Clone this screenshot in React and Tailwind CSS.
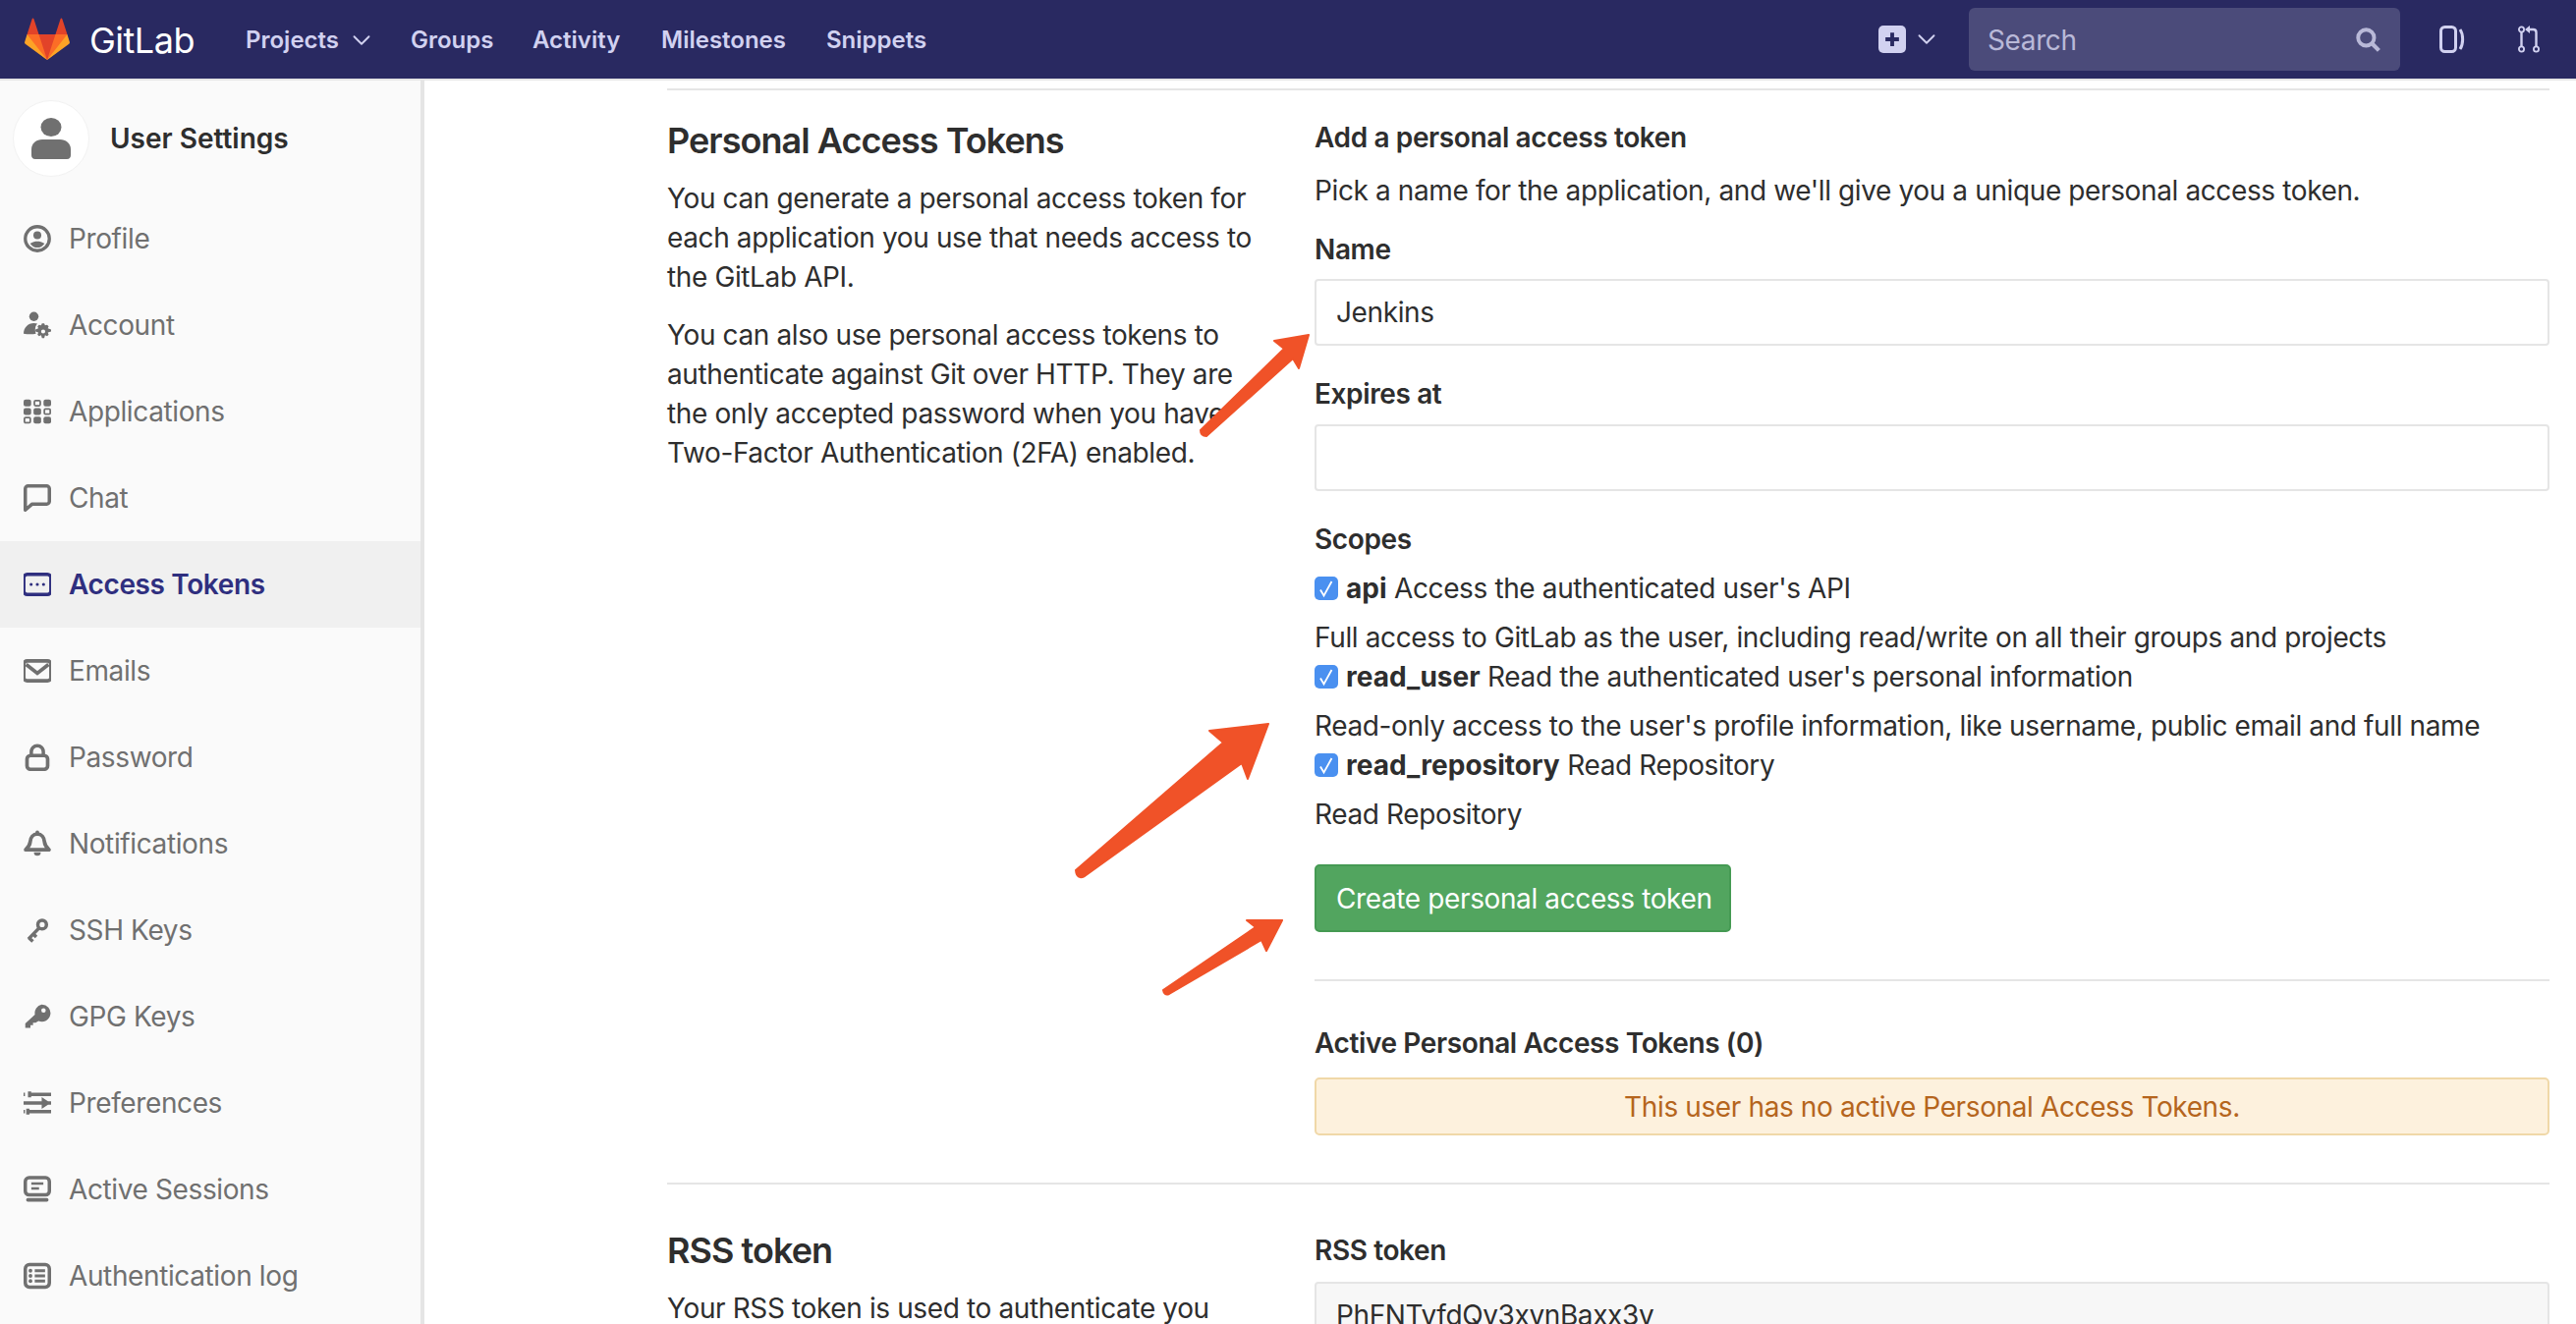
import { ChevronDown } from 'lucide-react';

const Tanuki = () => (
  <svg viewBox="0 0 36 36" className="w-[48px] h-[46px]">
    <path fill="#e24329" d="M2 14l9.38 9v-9l-4-12.28c-.205-.632-1.176-.632-1.38 0z" />
    <path fill="#e24329" d="M34 14l-9.38 9v-9l4-12.28c.205-.632 1.176-.632 1.38 0z" />
    <path fill="#e24329" d="M18 34.38 3 14 33 14Z" />
    <path fill="#fc6d26" d="M18 34.38 11.38 14 2 14 6 25Z" />
    <path fill="#fc6d26" d="M18 34.38 24.62 14 34 14 30 25Z" />
    <path fill="#fca326" d="M2 14L.1 20.16c-.18.565 0 1.2.5 1.56l17.42 12.66z" />
    <path fill="#fca326" d="M34 14l1.9 6.16c.18.565 0 1.2-.5 1.56L18 34.38z" />
  </svg>
);

const icons = {
  profile: (
    <>
      <circle cx="8" cy="8" r="7" fill="none" stroke="currentColor" strokeWidth="1.9" />
      <circle cx="8" cy="6" r="2.3" />
      <path d="M3.8 10.8c1.5-1 2.8-1.3 4.2-1.3s2.7.3 4.2 1.3C11 12.4 9.6 13.2 8 13.2s-3-.8-4.2-2.4z" />
    </>
  ),
  account: (
    <>
      <circle cx="6" cy="3" r="2.7" />
      <path d="M0 13c0-3.5 2.5-6.2 6-6.2.8 0 1.5.1 2 .4-1.2 1.2-1.6 3.6-.8 5.8-2 .4-4.5.4-7.2 0z" />
      <path d="M12 7l.5 1.2 1.2-.4.9.9-.5 1.2 1.9.6v1.2l-1.9.6.5 1.2-.9.9-1.2-.5-.5 1.6h-1.3l-.5-1.6-1.2.5-.9-.9.5-1.2-1.7-.6v-1.2l1.7-.6-.5-1.2.9-.9 1.2.4.5-1.2zm-.6 3.5a1.2 1.2 0 100 2.4 1.2 1.2 0 000-2.4z" fillRule="evenodd" />
    </>
  ),
  applications: (
    <>
      <rect x="0" y="1" width="4.4" height="4" rx="1.2" />
      <rect x="6.3" y="1.6" width="3.4" height="3" rx=".7" fill="none" stroke="currentColor" strokeWidth="1" />
      <rect x="11.6" y="1" width="4.4" height="4" rx="1.2" />
      <rect x="0" y="6" width="4.4" height="4" rx="1.2" />
      <rect x="5.8" y="6" width="4.4" height="4" rx="1.2" />
      <rect x="12.1" y="6.5" width="3.4" height="3" rx=".7" fill="none" stroke="currentColor" strokeWidth="1" />
      <rect x=".5" y="11.5" width="3.4" height="3" rx=".7" fill="none" stroke="currentColor" strokeWidth="1" />
      <rect x="5.8" y="11" width="4.4" height="4" rx="1.2" />
      <rect x="11.6" y="11" width="4.4" height="4" rx="1.2" />
    </>
  ),
  chat: (
    <path d="M2.5 1h11c.6 0 1.5.6 1.5 1.5v7.5c0 1-.9 1.5-1.5 1.5H5L1 15V2.5C1 1.6 1.900 1 2.500 1z" fill="none" stroke="currentColor" strokeWidth="2" strokeLinejoin="round" />
  ),
  token: (
    <>
      <rect x=".1" y="2.2" width="15.8" height="11.6" rx="2" fill="none" stroke="currentColor" strokeWidth="2" />
      <circle cx="4.400" cy="8" r=".9" />
      <circle cx="8" cy="8" r=".9" />
      <circle cx="11.600" cy="8" r=".9" />
    </>
  ),
  email: (
    <>
      <rect x=".1" y="2.200" width="15.8" height="11.6" rx="2" fill="none" stroke="currentColor" strokeWidth="2.1" />
      <path d="M1.500 4.300L8 9.400l6.500-5.100" fill="none" stroke="currentColor" strokeWidth="2.100" />
    </>
  ),
  lock: (
    <>
      <rect x="2" y="7" width="12" height="8" rx="2" fill="none" stroke="currentColor" strokeWidth="2.100" />
      <path d="M4.500 7V4.800a3.500 3.500 0 017 0V7" fill="none" stroke="currentColor" strokeWidth="2" />
    </>
  ),
  bell: (
    <>
      <path d="M8 2.400c2.600 0 3.900 2 4.100 4.300.2 2 1.200 3.400 2.700 4.800H1.200c1.500-1.400 2.500-2.800 2.700-4.800C4.100 4.400 5.400 2.400 8 2.400z" fill="none" stroke="currentColor" strokeWidth="2.100" strokeLinejoin="round" />
      <circle cx="8" cy="1.400" r="1.100" />
      <path d="M6 13h4a2 2 0 01-4 0z" />
    </>
  ),
  sshKey: (
    <>
      <circle cx="10.800" cy="4.800" r="2.500" fill="none" stroke="currentColor" strokeWidth="2" />
      <path d="M9 6.800L2.800 13.200M3.200 12.600l2.200 2M5.600 10.200l1.800 1.800" fill="none" stroke="currentColor" strokeWidth="2" />
    </>
  ),
  gpgKey: (
    <>
      <path d="M10.500 1a5 5 0 11-1.800 9.600L7 11.500H5.500V13H4v1.500H1V12l5.600-5.200A5 5 0 0110.500 1z" />
      <circle cx="11.600" cy="4.400" r="1.300" fill="#fafafa" />
    </>
  ),
  prefs: (
    <path d="M0 3h.8M3.400 3H16M3.500 1.300v3.400M0 8h11M13 8h3M11.500 6.300l2.500 1.700-2.500 1.700zM0 13h.8M3 13h13M2.500 11.300v3.400" fill="none" stroke="currentColor" strokeWidth="1.900" />
  ),
  sessions: (
    <>
      <rect x="1" y="1.200" width="14" height="10" rx="2.200" fill="none" stroke="currentColor" strokeWidth="2" />
      <path d="M4.500 4.600h7M4.500 7.400h4.500" fill="none" stroke="currentColor" strokeWidth="1.500" />
      <rect x="1.500" y="13" width="13" height="2.200" rx="1" />
    </>
  ),
  log: (
    <>
      <rect x="1" y="1.400" width="14" height="13.200" rx="2.400" fill="none" stroke="currentColor" strokeWidth="2" />
      <path d="M6.500 5h6M6.500 8h6M6.500 11h6" fill="none" stroke="currentColor" strokeWidth="1.700" />
      <circle cx="4" cy="5" r="1.100" />
      <circle cx="4" cy="8" r="1.100" />
      <circle cx="4" cy="11" r="1.100" />
    </>
  ),
};

const navLinks = [
  ['Profile', 'profile'],
  ['Account', 'account'],
  ['Applications', 'applications'],
  ['Chat', 'chat'],
  ['Access Tokens', 'token'],
  ['Emails', 'email'],
  ['Password', 'lock'],
  ['Notifications', 'bell'],
  ['SSH Keys', 'sshKey'],
  ['GPG Keys', 'gpgKey'],
  ['Preferences', 'prefs'],
  ['Active Sessions', 'sessions'],
  ['Authentication log', 'log'],
];

const scopes = [
  ['api', "Access the authenticated user's API", 'Full access to GitLab as the user, including read/write on all their groups and projects'],
  ['read_user', "Read the authenticated user's personal information", "Read-only access to the user's profile information, like username, public email and full name"],
  ['read_repository', 'Read Repository', 'Read Repository'],
];

const Check = () => (
  <span className="w-[24px] h-[24px] rounded-[5px] bg-[#4a90f0] flex items-center justify-center shrink-0 mr-[8px]">
    <svg viewBox="0 0 24 24" className="w-[24px] h-[24px]">
      <path d="M6 13.500l3.500 6L17.500 5" fill="none" stroke="#fff" strokeWidth="1.800" />
    </svg>
  </span>
);

const Header = () => (
  <header className="h-[82px] shrink-0 bg-[#292961] border-b-2 border-[#e5e5e5] flex items-center pl-[24px] pr-[37px]">
    <Tanuki />
    <span className="ml-[19px] mt-[2px] text-[36px] text-white tracking-[-0.5px] w-[159px]">GitLab</span>
    <nav className="flex items-center mt-[2px] text-[24px] font-semibold tracking-normal text-[#d1d1f0]">
      <span className="w-[103px]">Projects</span>
      <ChevronDown className="w-[30px] h-[30px] mr-[35px]" strokeWidth={1.5} />
      <span className="w-[124px]">Groups</span>
      <span className="w-[131px]">Activity</span>
      <span className="w-[168px]">Milestones</span>
      <span>Snippets</span>
    </nav>
    <div className="ml-auto flex items-center">
      <span className="w-[28px] h-[28px] rounded-[5px] bg-[#d1d1f0] flex items-center justify-center">
        <svg viewBox="0 0 16 16" className="w-[22px] h-[22px]">
          <path d="M8 3v10M3 8h10" stroke="#292961" strokeWidth="2.800" />
        </svg>
      </span>
      <ChevronDown className="w-[30px] h-[30px] ml-[6px] text-[#d1d1f0]" strokeWidth={1.5} />
      <div className="ml-[28px] w-[439px] h-[64px] rounded-[6px] bg-[#4b4b7a] flex items-center pl-[19px] pr-[20px] text-[28px] text-[#b9b9d8]">
        <span className="mt-[2px]">Search</span>
        <svg viewBox="0 0 16 16" className="ml-auto w-[26px] h-[26px]">
          <circle cx="7" cy="7" r="5" fill="none" stroke="#b9b9d8" strokeWidth="2.400" />
          <path d="M10.500 10.500L15 15" stroke="#b9b9d8" strokeWidth="2.600" />
        </svg>
      </div>
      <svg viewBox="0 0 26 28" className="ml-[40px] w-[26px] h-[28px] text-[#d1d1f0]">
        <rect x="1.500" y="1.500" width="15" height="25" rx="4" fill="none" stroke="currentColor" strokeWidth="3" />
        <path d="M21 4c3.500 5 3.500 15 0 20" fill="none" stroke="currentColor" strokeWidth="3" />
      </svg>
      <svg viewBox="0 0 22 28" className="ml-[54px] w-[22px] h-[28px] text-[#d1d1f0]">
        <circle cx="3.500" cy="4" r="2.600" fill="none" stroke="currentColor" strokeWidth="1.800" />
        <circle cx="3.500" cy="24" r="2.600" fill="none" stroke="currentColor" strokeWidth="1.800" />
        <circle cx="18.500" cy="24" r="2.600" fill="none" stroke="currentColor" strokeWidth="1.800" />
        <path d="M3.500 7v14M18.500 21V7c0-2-1-3-3-3h-4" fill="none" stroke="currentColor" strokeWidth="2.400" />
        <path d="M12 0v8L7 4z" fill="currentColor" />
      </svg>
    </div>
  </header>
);

const Sidebar = () => (
  <aside className="w-[432px] shrink-0 bg-[#fafafa] border-r-4 border-[#e5e5e5]">
    <div className="h-[117px] flex items-center pl-[13px]">
      <span className="w-[78px] h-[78px] rounded-full bg-white border border-[#f2f2f2] flex items-center justify-center">
        <svg viewBox="0 0 40 42" className="w-[40px] h-[42px] text-[#707070]">
          <ellipse cx="20" cy="9.500" rx="10.500" ry="9.500" fill="currentColor" />
          <path d="M0 38v-6c0-6 5-10 11-10h18c6 0 11 4 11 10v6c0 2-1 4-4 4H4c-3 0-4-2-4-4z" fill="currentColor" />
        </svg>
      </span>
      <span className="ml-[21px] text-[28px] font-semibold tracking-normal text-[#2e2e2e]">User Settings</span>
    </div>
    {navLinks.map(([label, icon]) => {
      const active = label === 'Access Tokens';
      return (
        <div key={label} className={`h-[88px] flex items-center pl-[24px] text-[28px] ${active ? 'bg-[#f0f0f0] text-[#2f2f7f] font-semibold' : 'text-[#707070]'}`}>
          <svg viewBox="0 0 16 16" fill="currentColor" className="w-[28px] h-[28px] shrink-0">
            {icons[icon]}
          </svg>
          <span className="ml-[18px]">{label}</span>
        </div>
      );
    })}
  </aside>
);

const Arrows = () => (
  <svg className="absolute inset-0 w-full h-full pointer-events-none" viewBox="0 0 2622 1348">
    <g fill="#f05228" stroke="#f05228" strokeWidth="2" strokeLinejoin="round">
      <path d="M1332 341L1297 347L1307 355L1222 438Q1222 444 1228 444L1316 365L1322 375Z" />
      <path d="M1291 737L1231 744L1245 756L1095 886Q1096 896 1104 892L1264 777L1270 793Z" />
      <path d="M1305 937L1269 937L1278 944L1184 1008Q1185 1014 1190 1012L1284 957L1289 968Z" />
    </g>
  </svg>
);

export default function App() {
  return (
    <div className="relative h-screen overflow-hidden flex flex-col bg-white text-[28px] leading-[40px] tracking-[-0.38px] text-[#2e2e2e] font-['Inter','Liberation_Sans',sans-serif]">
      <Header />
      <div className="flex flex-1 min-h-0">
        <Sidebar />
        <main className="flex-1 pl-[247px] pr-[27px]">
          <hr className="mt-[8px] border-t-2 border-[#e5e5e5]" />
          <section className="flex pt-[28px]">
            <div className="w-[659px] shrink-0 pr-[50px]">
              <h2 className="text-[36px] font-semibold leading-[50px] tracking-[-0.95px] -mt-[2px]">Personal Access Tokens</h2>
              <p className="mt-[14px]">You can generate a personal access token for each application you use that needs access to the GitLab API.</p>
              <p className="mt-[19px]">You can also use personal access tokens to authenticate against Git over HTTP. They are the only accepted password when you have Two-Factor Authentication (2FA) enabled.</p>
            </div>
            <div className="flex-1">
              <h5 className="font-semibold">Add a personal access token</h5>
              <p className="mt-[14px]">Pick a name for the application, and we'll give you a unique personal access token.</p>
              <label className="block mt-[20px] font-semibold">Name</label>
              <div className="mt-[10px] h-[68px] border-2 border-[#e5e5e5] rounded-[4px] flex items-center px-[20px]">Jenkins</div>
              <label className="block mt-[29px] font-semibold">Expires at</label>
              <div className="mt-[11px] h-[68px] border-2 border-[#e5e5e5] rounded-[4px]" />
              <label className="block mt-[29px] font-semibold">Scopes</label>
              <div className="mt-[10px]">
                {scopes.map(([name, title, desc]) => (
                  <div key={name}>
                    <div className="flex items-center">
                      <Check />
                      <span><b className="font-bold tracking-normal">{name}</b> {title}</span>
                    </div>
                    <p className="mt-[10px]">{desc}</p>
                  </div>
                ))}
              </div>
              <button className="mt-[31px] h-[69px] w-[424px] rounded-[5px] bg-[#52a55f] border-2 border-[#459a53] text-white text-left pl-[20px]">Create personal access token</button>
              <hr className="mt-[48px] border-t-2 border-[#e5e5e5]" />
              <h5 className="mt-[43px] font-semibold">Active Personal Access Tokens (0)</h5>
              <div className="mt-[15px] h-[59px] rounded-[5px] bg-[#fdf1dd] border-2 border-[#f0d8a8] text-[#b5651d] flex items-center justify-center">This user has no active Personal Access Tokens.</div>
            </div>
          </section>
          <hr className="mt-[48px] border-t-2 border-[#e5e5e5]" />
          <section className="flex pt-[47px]">
            <div className="w-[659px] shrink-0 pr-[50px]">
              <h2 className="text-[36px] font-semibold leading-[50px] tracking-[-0.95px] -mt-[5px]">RSS token</h2>
              <p className="mt-[14px]">Your RSS token is used to authenticate you</p>
            </div>
            <div className="flex-1">
              <label className="block font-semibold">RSS token</label>
              <div className="mt-[12px] h-[68px] border-2 border-[#e5e5e5] rounded-[4px] bg-[#f7f7f7] flex items-center px-[20px]">PhFNTvfdQv3xvnBaxx3v</div>
            </div>
          </section>
        </main>
      </div>
      <Arrows />
    </div>
  );
}
